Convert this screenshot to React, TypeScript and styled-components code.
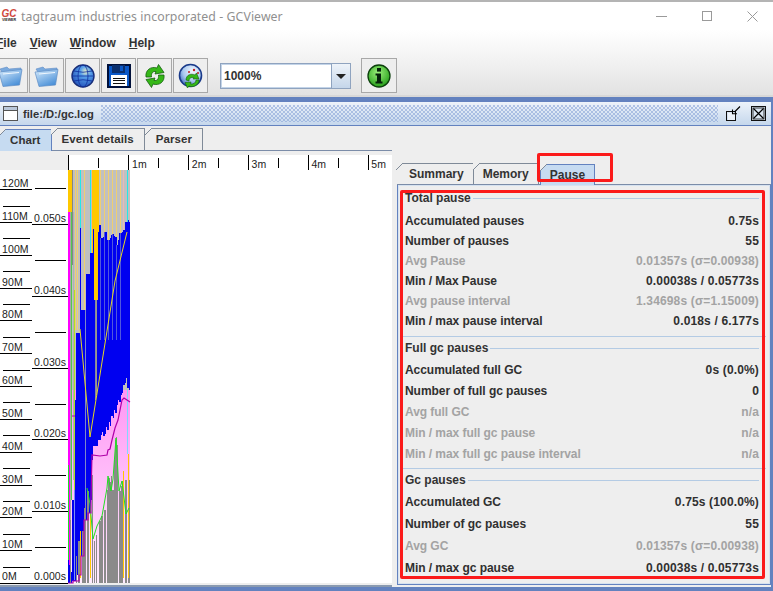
import React from "react";
import styled, { createGlobalStyle } from "styled-components";

const GlobalStyle = createGlobalStyle`
  html, body { margin: 0; padding: 0; background: #eee; }
  * { box-sizing: border-box; }
`;

const UI_FONT = `"Liberation Sans", Arial, sans-serif`;

// ---- chart data, all in page pixels minus the chart's top (155) ----
const T = 155;
const BLUE: [number, number, number][] = [
  [68, 560, 583], [69, 565, 583], [70, 572, 583], [72, 500, 581], [74, 400, 581],
  [76, 333, 575], [77, 333, 575], [78, 333, 575], [79, 333, 575], [80, 228, 575],
  [81, 310, 556], [82, 310, 556], [83, 310, 556], [84, 310, 520], [86, 274, 520],
  [87, 274, 520], [88, 274, 513], [89, 274, 513], [90, 253, 513], [91, 253, 500],
  [92, 253, 460], [93, 229, 446], [94, 300, 446], [98, 232, 440], [99, 225, 440],
  [101, 238, 435], [102, 238, 432], [103, 237, 436], [105, 232, 434], [106, 232, 427],
  [107, 240, 430], [109, 240, 422], [110, 238, 426], [111, 235, 416], [113, 234, 418],
  [114, 236, 410], [115, 237, 413], [117, 245, 405], [118, 240, 400], [119, 233, 402],
  [121, 233, 395], [122, 232, 393], [123, 230, 385], [125, 222, 383], [126, 222, 378],
  [127, 222, 388], [128, 220, 388], [129, 222, 390],
];
const ORANGE: [number, number, number, string][] = [
  [75, 170, 330, "#f0cf70"], [77, 170, 330, "#f0cf70"], [84, 170, 310, "#f0cf70"],
  [68, 170, 212, "#ffc800"], [69, 170, 212, "#ffc800"], [70, 170, 212, "#ffc800"], [71, 170, 212, "#ffc800"],
  [92, 170, 253, "#ffc800"], [93, 170, 229, "#ffc800"], [94, 170, 300, "#ffc800"], [95, 170, 300, "#ffc800"],
  [96, 170, 300, "#ffc800"], [97, 170, 390, "#ffc800"], [98, 170, 232, "#ffc800"],
  [100, 170, 238, "#f0cf70"], [104, 170, 232, "#f0cf70"], [108, 170, 240, "#f0cf70"],
  [112, 170, 234, "#f0cf70"], [116, 170, 245, "#f0cf70"], [120, 170, 233, "#f0cf70"], [123, 170, 230, "#e8b8b8"],
];
const ORANGE_OVER: [number, number, number, string][] = [
  [80, 531, 578, "#ffc800"], [90, 514, 578, "#ffc800"], [123, 471, 578, "#ffc800"], [128, 454, 578, "#ffc800"],
];
const CYAN: [number, number, number, string][] = [
  [80, 170, 228, "#22e8e8"], [90, 170, 253, "#22e8e8"], [127, 170, 222, "#22e8e8"],
  [127, 390, 454, "#80d8ff"],
];
const STRIPES: [number, number, number, string][] = [
  [72, 170, 265, "#858585"], [70, 212, 570, "#a8a8a8"], [73, 212, 480, "#b0b0b0"],
  [85, 310, 520, "#7d86c8"], [95, 300, 400, "#8a8a9a"], [96, 300, 395, "#9a9a8a"],
  [100, 238, 340, "#5058dc"], [104, 232, 340, "#5058dc"], [108, 240, 340, "#5058dc"],
  [112, 234, 340, "#5058dc"], [116, 245, 340, "#5058dc"], [120, 233, 340, "#5058dc"],
  [74, 480, 580, "#7d90f0"],
];
const GRAY: [number, number][] = [
  [70, 520], [76, 556], [78, 541], [79, 541], [82, 531], [83, 531], [84, 508], [85, 505], [87, 491], [88, 491],
  [92, 475], [94, 541], [96, 535], [99, 521], [100, 521], [101, 516], [102, 516], [104, 510], [105, 510],
  [107, 490], [108, 478], [109, 478], [110, 482], [111, 476], [112, 490], [113, 490], [114, 460],
  [115, 440], [116, 437], [117, 445], [119, 491], [120, 491], [121, 486], [122, 481],
  [125, 480], [126, 480], [128, 490], [129, 480],
];
const GREEN = "87,488 90,504 93,539 97,526 102,516 107,488 108,476 111,491 113,479 116,438 119,491 122,481 126,514 129,508";
const PURPLE = "68,583 73,583 73,581 79,581 79,575 81,575 81,556 84,556 84,520 88,520 88,513 91,513 91,498 92,455 100,456 107,455 108,450 110,449 112,440 115,428 118,420 122,400 124,398 130,402";

const memTicks = Array.from({ length: 25 }, (_, i) => i);
const timeTicks = Array.from({ length: 12 }, (_, i) => i);
const MEM_LABELS = ["0M", "10M", "20M", "30M", "40M", "50M", "60M", "70M", "80M", "90M", "100M", "110M", "120M"];
const TIME_LABELS = ["0.000s", "0.010s", "0.020s", "0.030s", "0.040s", "0.050s"];
const rulerTicks = Array.from({ length: 11 }, (_, i) => i);

function Chart() {
  const bar = (x: number, y0: number, y1: number, c: string, key: string) => (
    <rect key={key} x={x} y={y0 - T} width={1} height={Math.max(0, y1 - y0)} fill={c} />
  );
  return (
    <ChartSvg width={392} height={428} viewBox="0 0 392 428">
      <defs>
        <linearGradient id="heap" x1="0" y1="0" x2="0" y2="1">
          <stop offset="0" stopColor="#ff96f4" />
          <stop offset="1" stopColor="#ffecff" />
        </linearGradient>
      </defs>
      <rect x={0} y={0} width={392} height={428} fill="#fff" />
      <rect x={0} y={0} width={68} height={15} fill="#eeeeee" />
      <g shapeRendering="crispEdges">
        {/* ruler */}
        {rulerTicks.map((i) => (
          <rect key={i} x={68 + i * 30} y={i % 2 ? 3 : 0} width={1} height={i % 2 ? 10 : 15} fill="#000" />
        ))}
        {/* left axes */}
        {memTicks.map((i) => {
          const y = Math.round(583 - T - i * 16.41);
          return i % 2 === 0 ? (
            <rect key={"m" + i} x={0} y={y} width={32} height={1} fill="#000" />
          ) : (
            <rect key={"m" + i} x={3} y={y} width={27} height={1} fill="#000" />
          );
        })}
        {timeTicks.map((i) => {
          const y = Math.round(583 - T - i * 35.9);
          return i % 2 === 0 ? (
            <rect key={"t" + i} x={32} y={y} width={36} height={1} fill="#000" />
          ) : (
            <rect key={"t" + i} x={35} y={y} width={31} height={1} fill="#000" />
          );
        })}
        {/* heap columns */}
        <rect x={70} y={170 - T} width={60} height={220} fill="#c0c0c0" />
        <rect x={70} y={390 - T} width={60} height={193} fill="url(#heap)" />
        <rect x={68} y={212 - T} width={2} height={371} fill="#ff00ff" />
        {ORANGE.map((b, i) => bar(b[0], b[1], b[2], b[3], "o" + i))}
        {CYAN.map((b, i) => bar(b[0], b[1], b[2], b[3], "c" + i))}
        {BLUE.map((b, i) => (
          <rect key={"b" + i} x={b[0]} y={b[1] - T} width={i + 1 < BLUE.length ? BLUE[i + 1][0] - b[0] : 1} height={b[2] - b[1]} fill="#0000f0" />
        ))}
        {STRIPES.map((b, i) => bar(b[0], b[1], b[2], b[3], "s" + i))}
        {GRAY.map((b, i) => bar(b[0], b[1], 583, "#8a8a8a", "g" + i))}
        {ORANGE_OVER.map((b, i) => bar(b[0], b[1], b[2], b[3], "p" + i))}
      </g>
      <g fill="none" transform={`translate(0 ${-T})`}>
        <polyline points={GREEN} stroke="#22e022" strokeWidth={1} />
        <line x1={68.5} y1={465} x2={68.5} y2={560} stroke="#22e022" strokeWidth={1} />
        <line x1={71.5} y1={212} x2={71.5} y2={500} stroke="#4fc84f" strokeWidth={1} />
        <line x1={74.5} y1={290} x2={74.5} y2={490} stroke="#b0e020" strokeWidth={1} />
        <polyline points="80,329 90,437 115,281 127,232" stroke="#e6d820" strokeWidth={1} />
        <polyline points={PURPLE} stroke="#b000a8" strokeWidth={1.2} />
        <line x1={72} y1={416} x2={75} y2={416} stroke="#b000a8" />
      </g>
      {/* labels */}
      <AxisText>
        {MEM_LABELS.map((l, i) => (
          <text key={l} x={2} y={Math.round(583 - T - i * 32.83) - (i === 0 ? 3 : 2)}>{l}</text>
        ))}
        {TIME_LABELS.map((l, i) => (
          <text key={l} x={34} y={Math.round(583 - T - i * 71.8) - (i === 0 ? 3 : 2)}>{l}</text>
        ))}
        {["1m", "2m", "3m", "4m", "5m"].map((l, i) => (
          <text key={l} x={132 + i * 59.8} y={13}>{l}</text>
        ))}
      </AxisText>
    </ChartSvg>
  );
}

// ---- icons ----
const FolderIcon = ({ id }: { id: string }) => (
  <svg width={26} height={26} viewBox="0 0 26 26">
    <defs>
      <linearGradient id={id} x1="0" y1="0" x2="0.6" y2="1">
        <stop offset="0" stopColor="#d8ecfc" />
        <stop offset="1" stopColor="#4a90d8" />
      </linearGradient>
    </defs>
    <path d="M2 6 L9 4 L11 6 L23 5 L23 9 L5 11 Z" fill="#7aaade" stroke="#5f8cc4" strokeWidth={0.6} />
    <path d="M1 9 L24 6.5 L21.5 22 L5 23.5 Z" fill={`url(#${id})`} stroke="#5f8cc4" strokeWidth={0.7} />
    <path d="M5 11 L21 9.5" stroke="#eef6fe" strokeWidth={1} />
  </svg>
);

const GlobeIcon = () => (
  <svg width={26} height={26} viewBox="0 0 26 26">
    <defs>
      <radialGradient id="gl" cx="0.62" cy="0.3" r="0.8">
        <stop offset="0" stopColor="#e8f0c8" />
        <stop offset="0.3" stopColor="#58a0ea" />
        <stop offset="1" stopColor="#1c49b4" />
      </radialGradient>
    </defs>
    <circle cx={13} cy={13} r={11} fill="url(#gl)" stroke="#1a2f78" strokeWidth={1.4} />
    <g fill="none" stroke="#0e2f9e" strokeWidth={0.8}>
      <ellipse cx={13} cy={13} rx={5} ry={11} />
      <path d="M2 13 H24 M3.5 8 Q13 10.5 22.5 8 M3.5 18 Q13 15.5 22.5 18" />
    </g>
  </svg>
);

const SaveIcon = () => (
  <svg width={24} height={24} viewBox="0 0 24 24" shapeRendering="crispEdges">
    <rect x={1} y={1} width={22} height={22} fill="#0a58c8" stroke="#00103a" strokeWidth={1.2} />
    <rect x={5} y={1} width={13} height={8} fill="#0a2f6e" />
    <rect x={13} y={2} width={3} height={5} fill="#0a58c8" />
    <rect x={4} y={11} width={16} height={11} fill="#fff" />
    <path d="M6 14 H18 M6 16.5 H18 M6 19 H18" stroke="#111" strokeWidth={1} />
  </svg>
);

const RefreshIcon = () => (
  <svg width={24} height={26} viewBox="0 0 24 26">
    <g fill="#36b818" stroke="#155f10" strokeWidth={0.8} strokeLinejoin="round">
      <path d="M3 14 C2 7 8 3 14 5 L15.5 1.5 L21 9.5 L12 11 L13 8.5 C10 8 8 10 8.5 14 Z" />
      <path d="M21 12 C22 19 16 23 10 21 L8.5 24.5 L3 16.5 L12 15 L11 17.5 C14 18 16 16 15.5 12 Z" />
    </g>
  </svg>
);

const GlobeRefreshIcon = () => (
  <svg width={26} height={26} viewBox="0 0 26 26">
    <defs>
      <radialGradient id="gr" cx="0.6" cy="0.3" r="0.8">
        <stop offset="0" stopColor="#f4f8ff" />
        <stop offset="0.55" stopColor="#a8c8ee" />
        <stop offset="1" stopColor="#2a58b8" />
      </radialGradient>
    </defs>
    <circle cx={12.5} cy={12.5} r={11} fill="url(#gr)" stroke="#1a3a8a" strokeWidth={1.6} />
    <circle cx={16} cy={7} r={1.2} fill="#c02020" />
    <circle cx={20} cy={10} r={1} fill="#c02020" />
    <circle cx={11} cy={9} r={1} fill="#c02020" />
    <path d="M8 17 C8 12 13 10 17 12 L18.5 10 L21 16 L15 16 L16 14.5 C13 14 11 15 11 18 Z" fill="#36b818" stroke="#155f10" strokeWidth={0.6} />
    <path d="M21 17 C21 22 15 25 11 23 L9.5 25 L7 19.5 L13 19 L12.5 21 C15 21.5 18 20 18 17 Z" fill="#36b818" stroke="#155f10" strokeWidth={0.6} />
  </svg>
);

const InfoIcon = () => (
  <svg width={26} height={26} viewBox="0 0 26 26">
    <defs>
      <radialGradient id="inf" cx="0.45" cy="0.35" r="0.7">
        <stop offset="0" stopColor="#9cf07c" />
        <stop offset="1" stopColor="#1f9a14" />
      </radialGradient>
    </defs>
    <circle cx={13} cy={13} r={11} fill="url(#inf)" stroke="#0c400c" strokeWidth={1.3} />
    <rect x={11} y={5} width={4} height={3.6} fill="#05220a" />
    <path d="M9.5 10.5 H15 V18.5 H16.5 V20.5 H9.5 V18.5 H11 V12.5 H9.5 Z" fill="#05220a" />
  </svg>
);

const FrameDocIcon = () => (
  <svg width={15} height={15} viewBox="0 0 15 15" shapeRendering="crispEdges">
    <rect x={0.5} y={0.5} width={14} height={14} fill="#fff" stroke="#555" />
    <rect x={1} y={1} width={13} height={3} fill="#b9c7da" />
    <rect x={1} y={4} width={13} height={1} fill="#555" />
  </svg>
);

const IconifyIcon = () => (
  <svg width={16} height={16} viewBox="0 0 16 16">
    <rect x={1.5} y={5.5} width={9} height={9} fill="none" stroke="#111" strokeWidth={1.4} shapeRendering="crispEdges" />
    <rect x={3} y={7} width={7} height={7} fill="#fff" opacity={0.6} />
    <path d="M15 0.5 L9.5 6 M7.5 3.5 V7.8 H12" fill="none" stroke="#000" strokeWidth={1.1} />
  </svg>
);

const CloseBoxIcon = () => (
  <svg width={15} height={15} viewBox="0 0 15 15">
    <rect x={0.5} y={0.5} width={14} height={14} fill="#dbe6f2" stroke="#111" />
    <rect x={2} y={2} width={11} height={11} fill="none" stroke="#111" strokeWidth={0.8} />
    <path d="M2.5 2.5 L12.5 12.5 M12.5 2.5 L2.5 12.5" stroke="#000" strokeWidth={1.2} />
  </svg>
);

const WinMin = () => (
  <svg width={11} height={11} viewBox="0 0 11 11"><path d="M0 5.5 H11" stroke="#9a9a9a" strokeWidth={1} /></svg>
);
const WinMax = () => (
  <svg width={10} height={10} viewBox="0 0 10 10"><rect x={0.5} y={0.5} width={9} height={9} fill="none" stroke="#9a9a9a" /></svg>
);
const WinClose = () => (
  <svg width={11} height={11} viewBox="0 0 11 11"><path d="M0.5 0.5 L10.5 10.5 M10.5 0.5 L0.5 10.5" stroke="#9a9a9a" /></svg>
);

// ---- data ----
type Row = { label: string; value: string; dim?: boolean };
const SECTIONS: { title: string; rowH: number; gap: number; pad: number; first?: boolean; rows: Row[] }[] = [
  {
    title: "Total pause", rowH: 20, gap: 5, pad: 5, first: true,
    rows: [
      { label: "Accumulated pauses", value: "0.75s" },
      { label: "Number of pauses", value: "55" },
      { label: "Avg Pause", value: "0.01357s (σ=0.00938)", dim: true },
      { label: "Min / Max Pause", value: "0.00038s / 0.05773s" },
      { label: "Avg pause interval", value: "1.34698s (σ=1.15009)", dim: true },
      { label: "Min / max pause interval", value: "0.018s / 6.177s" },
    ],
  },
  {
    title: "Full gc pauses", rowH: 21, gap: 3, pad: 4,
    rows: [
      { label: "Accumulated full GC", value: "0s (0.0%)" },
      { label: "Number of full gc pauses", value: "0" },
      { label: "Avg full GC", value: "n/a", dim: true },
      { label: "Min / max full gc pause", value: "n/a", dim: true },
      { label: "Min / max full gc pause interval", value: "n/a", dim: true },
    ],
  },
  {
    title: "Gc pauses", rowH: 22, gap: 3, pad: 0,
    rows: [
      { label: "Accumulated GC", value: "0.75s (100.0%)" },
      { label: "Number of gc pauses", value: "55" },
      { label: "Avg GC", value: "0.01357s (σ=0.00938)", dim: true },
      { label: "Min / max gc pause", value: "0.00038s / 0.05773s" },
    ],
  },
];

export default function App() {
  return (
    <Page>
      <GlobalStyle />
      <TitleBar>
        <Logo>
          <LogoMark>GC</LogoMark>
          <LogoSub>VIEWER</LogoSub>
        </Logo>
        <TitleText>tagtraum industries incorporated - GCViewer</TitleText>
        <WinButtons>
          <WinBtn><WinMin /></WinBtn>
          <WinBtn><WinMax /></WinBtn>
          <WinBtn><WinClose /></WinBtn>
        </WinButtons>
      </TitleBar>
      <MenuBar>
        {["File", "View", "Window", "Help"].map((m) => (
          <MenuItem key={m}>
            <u>{m[0]}</u>
            {m.slice(1)}
          </MenuItem>
        ))}
      </MenuBar>
      <Toolbar>
        <ToolButton><FolderIcon id="f1" /></ToolButton>
        <ToolButton><FolderIcon id="f2" /></ToolButton>
        <ToolButton><GlobeIcon /></ToolButton>
        <ToolButton><SaveIcon /></ToolButton>
        <ToolButton><RefreshIcon /></ToolButton>
        <ToolButton><GlobeRefreshIcon /></ToolButton>
        <Combo>
          <ComboValue>1000%</ComboValue>
          <ComboArrow />
        </Combo>
        <InfoButton><InfoIcon /></InfoButton>
      </Toolbar>
      <Desktop>
        <Frame>
          <FrameTitle>
            <FrameDocIcon />
            <FrameName>file:/D:/gc.log</FrameName>
            <Dots />
            <IconifyIcon />
            <CloseBoxIcon />
          </FrameTitle>
          <Body>
            <LeftPane>
              <TabStrip>
                <Tab $active $lead={-1}>Chart</Tab>
                <Tab>Event details</Tab>
                <Tab $lead={1}>Parser</Tab>
              </TabStrip>
              <Chart />
            </LeftPane>
            <RightPane>
              <TabStrip>
                <Tab $small $indent={12}>Summary</Tab>
                <Tab $small>Memory</Tab>
                <Tab $small $active $lead={1}>Pause</Tab>
              </TabStrip>
              <Panel>
                {SECTIONS.map((s) => (
                  <Section key={s.title} $first={s.first} $pad={s.pad}>
                    <SectionHead>
                      <SectionTitle>{s.title}</SectionTitle>
                      <SectionRule />
                    </SectionHead>
                    <Rows $gap={s.gap}>
                      {s.rows.map((r) => (
                        <StatRow key={r.label} $h={s.rowH} $dim={r.dim}>
                          <StatLabel>{r.label}</StatLabel>
                          <StatValue>{r.value}</StatValue>
                        </StatRow>
                      ))}
                    </Rows>
                  </Section>
                ))}
              </Panel>
              <TabMark />
              <PanelMark />
            </RightPane>
          </Body>
        </Frame>
      </Desktop>
    </Page>
  );
}

const Page = styled.div`
  position: relative;
  width: 773px;
  height: 591px;
  overflow: hidden;
  display: flex;
  flex-direction: column;
  background: #eee;
  font-family: ${UI_FONT};
`;

const TitleBar = styled.div`
  height: 30px;
  flex: none;
  display: flex;
  align-items: center;
  padding-left: 1px;
  background: #fff;
  border-top: 2px solid #b4b4b4;
`;

const Logo = styled.div`
  width: 16px;
  display: flex;
  flex-direction: column;
  align-items: center;
  line-height: 1;
`;

const LogoMark = styled.span`
  font: italic bold 10px "Liberation Sans", sans-serif;
  color: #d0483c;
  line-height: 9px;
`;

const LogoSub = styled.span`
  font: bold 3.6px "Liberation Sans", sans-serif;
  color: #222;
  line-height: 5px;
`;

const TitleText = styled.div`
  margin-left: 4px;
  font: 12.3px "Noto Sans", sans-serif;
  letter-spacing: 0.07px;
  color: #909090;
`;

const WinButtons = styled.div`
  margin-left: auto;
  display: flex;
  align-items: center;
  gap: 35px;
  padding-right: 15px;
`;

const WinBtn = styled.div`
  display: flex;
`;

const MenuBar = styled.div`
  height: 26px;
  flex: none;
  display: flex;
  align-items: center;
  gap: 13px;
  margin-left: -4px;
  background: linear-gradient(#ffffff, #f4f4f4);
`;

const MenuItem = styled.span`
  font-size: 12px;
  font-weight: bold;
  color: #333;
`;

const Toolbar = styled.div`
  height: 41px;
  flex: none;
  display: flex;
  align-items: flex-start;
  gap: 1px;
  margin-left: -7px;
  padding-top: 2px;
  background: linear-gradient(#f4f4f4, #e2e2e2);
  border-bottom: 2px solid #d8d8d8;
`;

const ToolButton = styled.div`
  width: 35px;
  height: 35px;
  display: flex;
  align-items: center;
  justify-content: center;
  background: #eeeeee;
  border: 1px solid #a8a8a8;
`;

const InfoButton = styled(ToolButton)`
  margin-left: 9px;
  width: 36px;
`;

const Combo = styled.div`
  margin: 5px 0 0 11px;
  width: 131px;
  height: 26px;
  display: flex;
  border: 1px solid #8fa3bf;
  box-shadow: inset 0 0 0 1px #c3d4e8;
`;

const ComboValue = styled.div`
  flex: 1;
  display: flex;
  align-items: center;
  padding-left: 2px;
  margin: 1px 0 1px 1px;
  background: #fff;
  font-size: 12px;
  font-weight: bold;
  color: #333;
`;

const ComboArrow = styled.div`
  width: 19px;
  border-left: 1px solid #8fa3bf;
  background: linear-gradient(#eef3f9, #c5d6ea);
  display: flex;
  align-items: center;
  justify-content: center;

  &::after {
    content: "";
    border-left: 5px solid transparent;
    border-right: 5px solid transparent;
    border-top: 5px solid #222;
  }
`;

const Desktop = styled.div`
  flex: 1;
  min-height: 0;
  display: flex;
  padding: 5px 2px 4px 0;
  background: #6382bf;
`;

const Frame = styled.div`
  flex: 1;
  min-width: 0;
  display: flex;
  flex-direction: column;
  background: #eeeeee;
`;

const FrameTitle = styled.div`
  height: 24px;
  flex: none;
  display: flex;
  align-items: center;
  padding: 0 5px 0 3px;
  background: linear-gradient(#edf3fa, #c5d7ec);
  border-bottom: 1px solid #6382bf;

  & > svg:nth-last-child(2) {
    margin-right: 10px;
  }
`;

const FrameName = styled.span`
  margin-left: 5px;
  font-size: 11.2px;
  font-weight: bold;
  color: #333;
  white-space: nowrap;
`;

const Dots = styled.div`
  flex: 1;
  height: 17px;
  margin: 0 7px;
  background-image: radial-gradient(circle at 1px 1px, #86a2d6 0.5px, transparent 1px),
    radial-gradient(circle at 1px 1px, #86a2d6 0.5px, transparent 1px);
  background-size: 4px 4px;
  background-position: 0 0, 2px 2px;
`;

const Body = styled.div`
  flex: 1;
  min-height: 0;
  display: flex;
`;

const LeftPane = styled.div`
  width: 392px;
  flex: none;
  padding-top: 2px;
  display: flex;
  flex-direction: column;
  border-bottom: 2px solid #8a9ab0;
`;

const TabStrip = styled.div`
  height: 23px;
  flex: none;
  display: flex;
  align-items: flex-end;
  border-bottom: 1px solid #7b8ca8;
`;

const Tab = styled.div<{ $active?: boolean; $small?: boolean; $lead?: number; $indent?: number }>`
  position: relative;
  height: ${(p) => (p.$small ? "21px" : "22px")};
  display: flex;
  align-items: center;
  padding: 0 ${(p) => (p.$small ? "9px" : "10px")} ${(p) => (p.$small ? "0" : "2px")} ${(p) => p.$indent ?? (p.$small ? 9 : 10)}px;
  margin-left: ${(p) => p.$lead ?? 0}px;
  margin-bottom: ${(p) => (p.$active ? "-1px" : "0")};
  font-size: ${(p) => (p.$small ? "12px" : "11.5px")};
  letter-spacing: ${(p) => (p.$small ? "0" : "0.1px")};
  font-weight: bold;
  color: #333;
  background: ${(p) => (p.$active ? "#c6dbf1" : "#eeeeee")};
  border: 1px solid ${(p) => (p.$active ? "#6382bf" : "#7f8a98")};
  border-bottom: none;
  border-left-width: ${(p) => (p.$active ? "1px" : "0")};

  &::before {
    content: "";
    position: absolute;
    top: -1px;
    left: -1px;
    width: 7px;
    height: 7px;
    background: linear-gradient(135deg, #eee 44%, #7f8a98 44%, #7f8a98 56%, transparent 56%);
  }
`;

const ChartSvg = styled.svg`
  display: block;
  margin-top: 4px;
  flex: none;
  overflow: visible;
`;

const AxisText = styled.g`
  font-family: ${UI_FONT};
  font-size: 10.5px;
  letter-spacing: 0.1px;
  fill: #222;
`;

const RightPane = styled.div`
  position: relative;
  flex: 1;
  min-width: 0;
  padding: 36px 0 2px 5px;
  display: flex;
  flex-direction: column;
`;

const Panel = styled.div`
  flex: 1;
  min-height: 0;
  padding: 5px 0 0 2px;
  border: 1px solid #6382bf;
  border-top: none;
  box-shadow: inset 0 0 0 1px #d6e2f0;
`;

const Section = styled.section<{ $first?: boolean; $pad: number }>`
  padding: ${(p) => (p.$first ? "0" : "3px")} 7px ${(p) => p.$pad}px 5px;
  ${(p) => (p.$first ? "" : "border-top: 1px solid #b4cbe4;")}
  width: 366px;
`;

const SectionHead = styled.div`
  height: 16px;
  display: flex;
  align-items: center;
  gap: 2px;
  font-size: 12px;
  font-weight: bold;
  color: #333;
`;

const SectionTitle = styled.span`
  white-space: nowrap;
`;

const SectionRule = styled.div`
  flex: 1;
  height: 1px;
  background: #b4cbe4;
`;

const Rows = styled.div<{ $gap: number }>`
  margin-top: ${(p) => p.$gap}px;
`;

const StatRow = styled.div<{ $h: number; $dim?: boolean }>`
  height: ${(p) => p.$h}px;
  display: flex;
  align-items: center;
  justify-content: space-between;
  font-size: 12px;
  font-weight: bold;
  color: ${(p) => (p.$dim ? "#a3a3a3" : "#303030")};
`;

const StatLabel = styled.span`
  letter-spacing: -0.05px;
`;

const StatValue = styled.span`
  letter-spacing: 0.15px;
`;

const TabMark = styled.div`
  position: absolute;
  left: 145px;
  top: 27px;
  width: 76px;
  height: 29px;
  border: 3px solid #fb1a1a;
  border-radius: 2px;
`;

const PanelMark = styled.div`
  position: absolute;
  left: 8px;
  top: 64px;
  width: 365px;
  height: 389px;
  border: 3px solid #fb1a1a;
  border-radius: 2px;
`;
